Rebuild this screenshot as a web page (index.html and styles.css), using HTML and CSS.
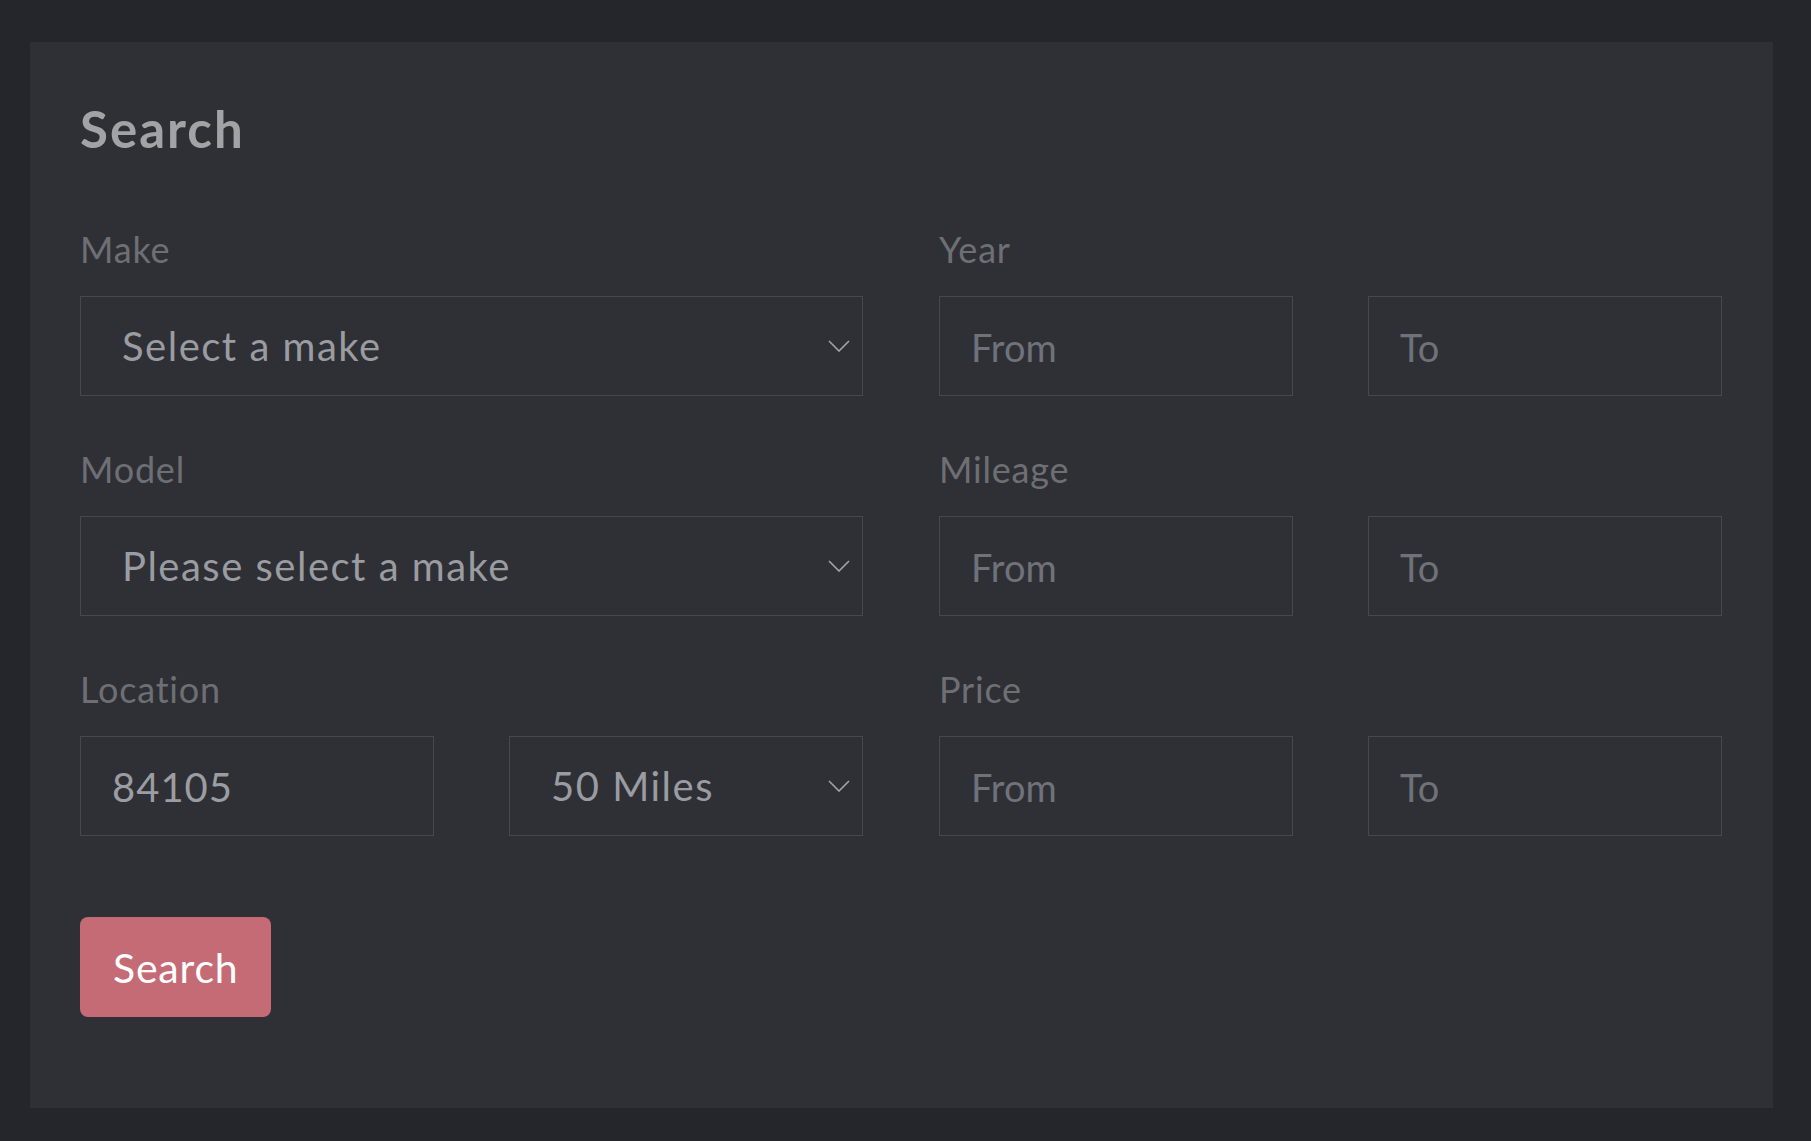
FILE: index.html
```html
<!DOCTYPE html>
<html lang="en">
<head>
<meta charset="utf-8">
<title>Search</title>
<link rel="stylesheet" href="styles.css">
</head>
<body>
<main class="panel">
  <h2 class="title">Search</h2>
  <form class="form">
    <div class="field">
      <label class="label">Make</label>
      <div class="controls one">
        <div class="select"><span class="select-text">Select a make</span><svg class="chev" width="22" height="12" viewBox="0 0 22 12"><polyline points="1,1 11,11 21,1" fill="none" stroke="#a3a4a8" stroke-width="1.6"/></svg></div>
      </div>
    </div>
    <div class="field">
      <label class="label">Year</label>
      <div class="controls two">
        <input class="input" placeholder="From">
        <input class="input" placeholder="To">
      </div>
    </div>
    <div class="field">
      <label class="label">Model</label>
      <div class="controls one">
        <div class="select"><span class="select-text">Please select a make</span><svg class="chev" width="22" height="12" viewBox="0 0 22 12"><polyline points="1,1 11,11 21,1" fill="none" stroke="#a3a4a8" stroke-width="1.6"/></svg></div>
      </div>
    </div>
    <div class="field">
      <label class="label">Mileage</label>
      <div class="controls two">
        <input class="input" placeholder="From">
        <input class="input" placeholder="To">
      </div>
    </div>
    <div class="field">
      <label class="label">Location</label>
      <div class="controls two">
        <input class="input value" value="84105">
        <div class="select"><span class="select-text">50 Miles</span><svg class="chev" width="22" height="12" viewBox="0 0 22 12"><polyline points="1,1 11,11 21,1" fill="none" stroke="#a3a4a8" stroke-width="1.6"/></svg></div>
      </div>
    </div>
    <div class="field">
      <label class="label">Price</label>
      <div class="controls two">
        <input class="input" placeholder="From">
        <input class="input" placeholder="To">
      </div>
    </div>
  </form>
  <button class="btn" type="button">Search</button>
</main>
</body>
</html>
```
FILE: styles.css
```css
html, body {
  margin: 0;
  padding: 0;
}
body {
  background: #25262b;
  font-family: "Lato", "Liberation Sans", sans-serif;
  padding: 42px 38px 33px 30px;
}
.panel {
  background: #2f3035;
  padding: 57px 51px 91px 50px;
}
.title {
  margin: 0 0 69px 0;
  font-size: 51px;
  line-height: 60px;
  font-weight: 700;
  letter-spacing: 2px;
  color: #a2a3a7;
}
.form {
  display: grid;
  grid-template-columns: 1fr 1fr;
  column-gap: 76px;
  row-gap: 52px;
}
.field {
  display: flex;
  flex-direction: column;
}
.label {
  font-size: 36px;
  line-height: 43px;
  letter-spacing: 0.8px;
  color: #6e6f74;
  margin-bottom: 25px;
}
.controls {
  display: grid;
  column-gap: 75px;
}
.controls.one { grid-template-columns: 1fr; }
.controls.two { grid-template-columns: 1fr 1fr; }
.input {
  box-sizing: border-box;
  height: 100px;
  width: 100%;
  min-width: 0;
  margin: 0;
  padding: 2px 31px 0;
  background: transparent;
  border: 1px solid #47484d;
  border-radius: 0;
  font-family: inherit;
  font-size: 38px;
  color: #9c9da2;
  outline: none;
}
.input.value {
  font-size: 40px;
  letter-spacing: 1px;
}
.input::placeholder {
  color: #6f727a;
}
.select {
  box-sizing: border-box;
  height: 100px;
  border: 1px solid #47484d;
  display: flex;
  align-items: center;
  justify-content: space-between;
  padding: 0 12px 0 41px;
  font-size: 40px;
  letter-spacing: 1.5px;
  color: #9a9ca1;
}
.chev {
  flex: none;
}
.btn {
  margin-top: 81px;
  height: 100px;
  padding: 0 33px;
  background: #c56b75;
  color: #ffffff;
  border: none;
  border-radius: 8px;
  font-family: inherit;
  font-size: 41px;
  letter-spacing: 0.8px;
  cursor: pointer;
}
```
